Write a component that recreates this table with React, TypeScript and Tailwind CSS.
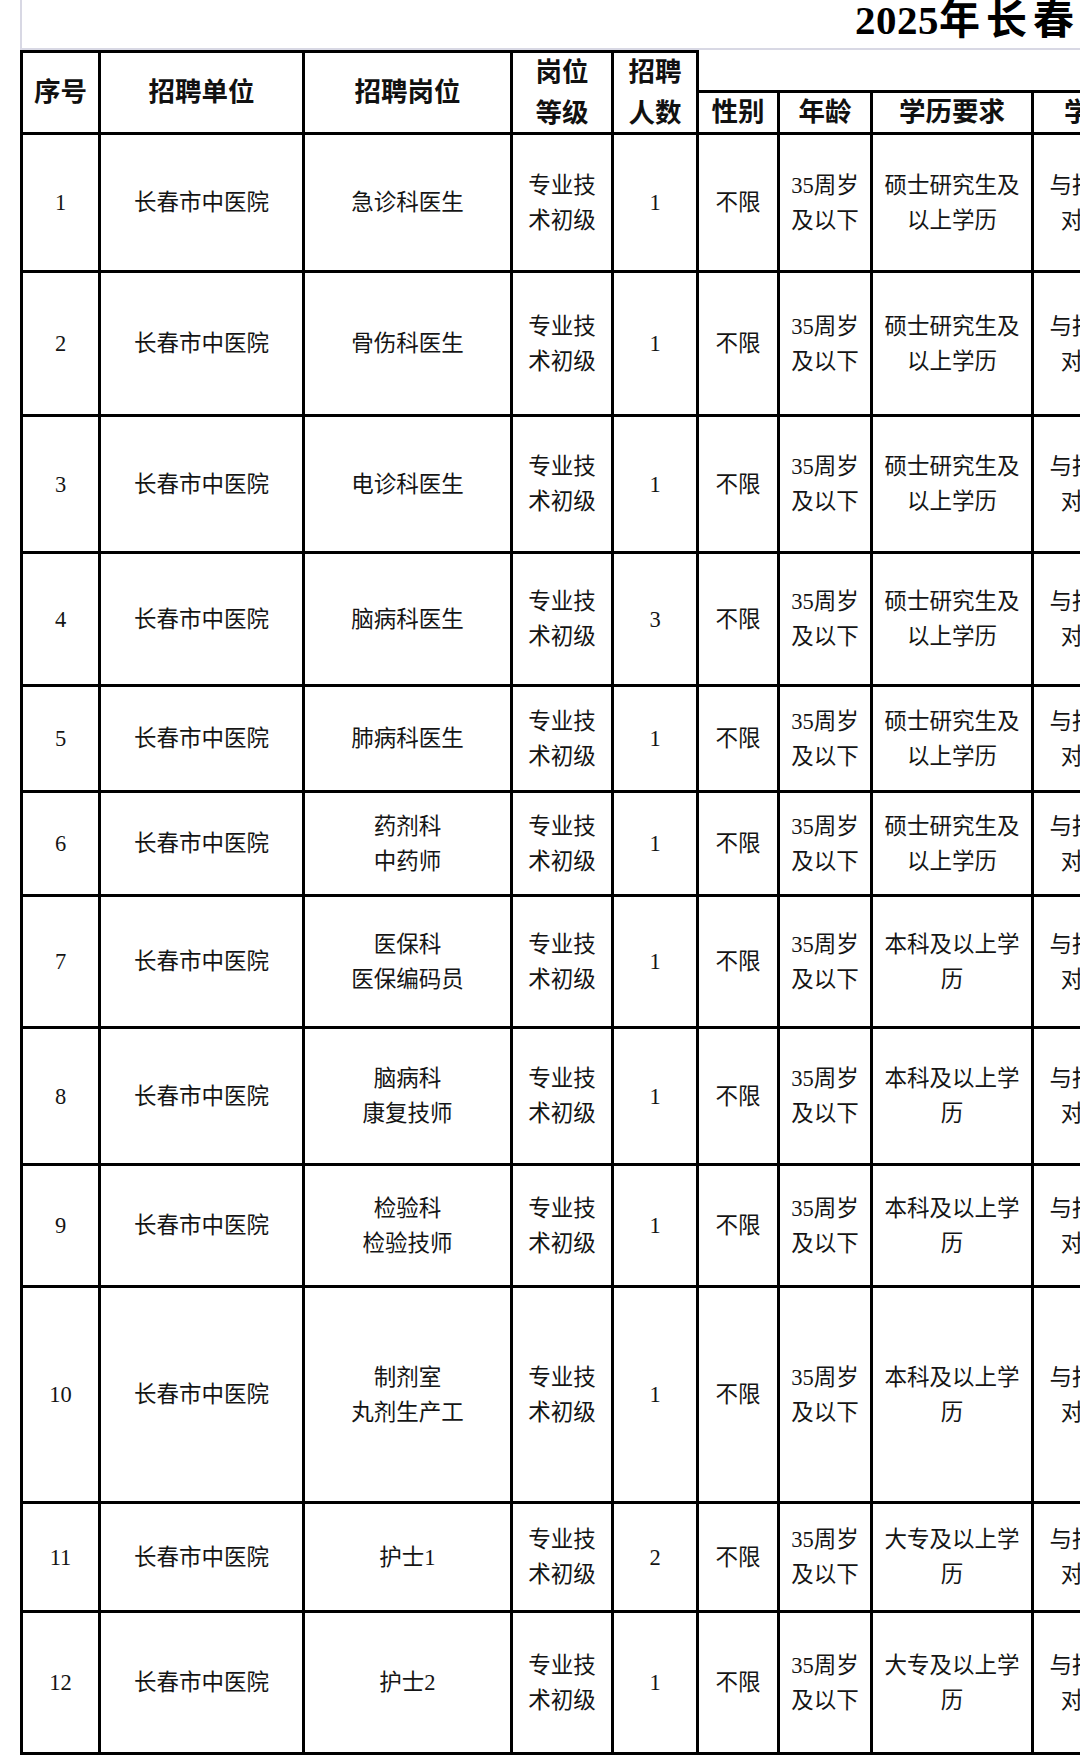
import React from "react";

type Row = {
  n: string;
  pos: string[];
  count: string;
  edu: string[];
};

const edu1 = ["硕士研究生及", "以上学历"];
const edu2 = ["本科及以上学", "历"];
const edu3 = ["大专及以上学", "历"];

const rows: Row[] = [
  { n: "1", pos: ["急诊科医生"], count: "1", edu: edu1 },
  { n: "2", pos: ["骨伤科医生"], count: "1", edu: edu1 },
  { n: "3", pos: ["电诊科医生"], count: "1", edu: edu1 },
  { n: "4", pos: ["脑病科医生"], count: "3", edu: edu1 },
  { n: "5", pos: ["肺病科医生"], count: "1", edu: edu1 },
  { n: "6", pos: ["药剂科", "中药师"], count: "1", edu: edu1 },
  { n: "7", pos: ["医保科", "医保编码员"], count: "1", edu: edu2 },
  { n: "8", pos: ["脑病科", "康复技师"], count: "1", edu: edu2 },
  { n: "9", pos: ["检验科", "检验技师"], count: "1", edu: edu2 },
  { n: "10", pos: ["制剂室", "丸剂生产工"], count: "1", edu: edu2 },
  { n: "11", pos: ["护士1"], count: "2", edu: edu3 },
  { n: "12", pos: ["护士2"], count: "1", edu: edu3 },
];

function Lines({ lines }: { lines: string[] }) {
  return (
    <span>
      {lines.map((l, i) => (
        <React.Fragment key={i}>
          {i > 0 && <br />}
          {l}
        </React.Fragment>
      ))}
    </span>
  );
}

const hd =
  "flex items-center justify-center text-center border-r-[3px] border-b-[3px] border-black font-bold text-[26.5px] leading-[41px] text-[#111] whitespace-nowrap overflow-hidden";
const bd =
  "flex items-center justify-center text-center border-r-[3px] border-b-[3px] border-black text-[22.5px] leading-[35px] text-[#151515] whitespace-nowrap overflow-hidden";

export default function App() {
  return (
    <div
      className="w-[1080px] h-[1760px] overflow-hidden bg-white"
      style={{ fontFamily: '"Liberation Serif", "Noto Sans CJK SC", serif' }}
    >
      <div className="ml-[20px] h-[50px] border-l-2 border-b-2 border-[#d8d8e4] overflow-hidden pl-[833px] whitespace-nowrap">
        <span className="font-bold text-[41px] leading-[40px] text-black tracking-[0.5px]">
          2025<span className="tracking-[6px]">年长春市中医院公开招聘工作人员岗位计划表</span>
        </span>
      </div>
      <div className="ml-[20px] grid w-[1183px] grid-cols-[81px_204px_208px_101px_85px_81px_93px_161px_169px] grid-rows-[43px_42px_138px_144px_137px_133px_106px_104px_132px_137px_122px_216px_109px_142px]">
        <div className={`${hd} row-span-2 border-l-[3px] border-t-[3px]`}>序号</div>
        <div className={`${hd} row-span-2 border-t-[3px]`}>招聘单位</div>
        <div className={`${hd} row-span-2 border-t-[3px]`}>招聘岗位</div>
        <div className={`${hd} row-span-2 border-t-[3px]`}>
          <Lines lines={["岗位", "等级"]} />
        </div>
        <div className={`${hd} row-span-2 border-t-[3px]`}>
          <Lines lines={["招聘", "人数"]} />
        </div>
        <div className={`${hd} col-span-4`}></div>
        <div className={hd}>性别</div>
        <div className={hd}>年龄</div>
        <div className={hd}>学历要求</div>
        <div className={hd}>学位要求</div>

        {rows.map((r) => (
          <React.Fragment key={r.n}>
            <div className={`${bd} border-l-[3px]`}>{r.n}</div>
            <div className={bd}>长春市中医院</div>
            <div className={bd}>
              <Lines lines={r.pos} />
            </div>
            <div className={bd}>
              <Lines lines={["专业技", "术初级"]} />
            </div>
            <div className={bd}>{r.count}</div>
            <div className={bd}>不限</div>
            <div className={bd}>
              <Lines lines={["35周岁", "及以下"]} />
            </div>
            <div className={bd}>
              <Lines lines={r.edu} />
            </div>
            <div className={bd}>
              <Lines lines={["与报考岗位相", "对应的专业"]} />
            </div>
          </React.Fragment>
        ))}
      </div>
    </div>
  );
}
